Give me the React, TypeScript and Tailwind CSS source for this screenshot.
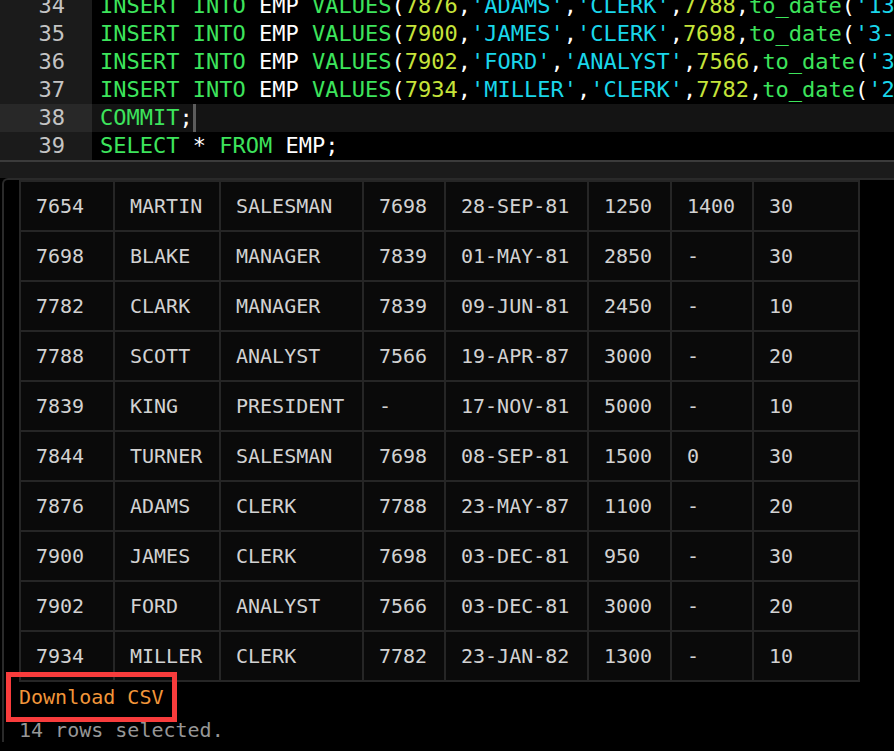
import React from "react";

const codeLines = [
  { no: 34, text: "INSERT INTO EMP VALUES(7876,'ADAMS','CLERK',7788,to_date('13-JUL-87','dd-mm-rr')-51,1100,NULL,20);" },
  { no: 35, text: "INSERT INTO EMP VALUES(7900,'JAMES','CLERK',7698,to_date('3-12-1981','dd-mm-yyyy'),950,NULL,30);" },
  { no: 36, text: "INSERT INTO EMP VALUES(7902,'FORD','ANALYST',7566,to_date('3-12-1981','dd-mm-yyyy'),3000,NULL,20);" },
  { no: 37, text: "INSERT INTO EMP VALUES(7934,'MILLER','CLERK',7782,to_date('23-1-1982','dd-mm-yyyy'),1300,NULL,10);" },
  { no: 38, text: "COMMIT;", active: true },
  { no: 39, text: "SELECT * FROM EMP;" },
];

const rows = [
  ["7654", "MARTIN", "SALESMAN", "7698", "28-SEP-81", "1250", "1400", "30"],
  ["7698", "BLAKE", "MANAGER", "7839", "01-MAY-81", "2850", "-", "30"],
  ["7782", "CLARK", "MANAGER", "7839", "09-JUN-81", "2450", "-", "10"],
  ["7788", "SCOTT", "ANALYST", "7566", "19-APR-87", "3000", "-", "20"],
  ["7839", "KING", "PRESIDENT", "-", "17-NOV-81", "5000", "-", "10"],
  ["7844", "TURNER", "SALESMAN", "7698", "08-SEP-81", "1500", "0", "30"],
  ["7876", "ADAMS", "CLERK", "7788", "23-MAY-87", "1100", "-", "20"],
  ["7900", "JAMES", "CLERK", "7698", "03-DEC-81", "950", "-", "30"],
  ["7902", "FORD", "ANALYST", "7566", "03-DEC-81", "3000", "-", "20"],
  ["7934", "MILLER", "CLERK", "7782", "23-JAN-82", "1300", "-", "10"],
];

const keywords = ["INSERT", "INTO", "VALUES", "COMMIT", "SELECT", "FROM", "to_date", "NULL"];

// split a line into coloured pieces
const tokenize = (line: string) => {
  const re = /('[^']*'|\d+|[A-Za-z_]+|[^A-Za-z_\d']+)/g;
  const out: { t: string; c: string }[] = [];
  let m: RegExpExecArray | null;
  while ((m = re.exec(line))) {
    const t = m[0];
    let c = "text-white";
    if (t.startsWith("'")) c = "text-[#1ad6ea]";
    else if (/^\d+$/.test(t)) c = "text-[#c6e43a]";
    else if (keywords.includes(t)) c = "text-[#3de45c]";
    out.push({ t, c });
  }
  return out;
};

const App: React.FC = () => {
  return (
    <div className="relative w-[894px] h-[751px] overflow-hidden bg-black font-['DejaVu_Sans_Mono',monospace]">
      {/* editor */}
      <div className="-mt-[8px] text-[22px] leading-[28px]">
        {codeLines.map((line) => (
          <div key={line.no} className="flex h-[28px]">
            <div
              className={`w-[92px] shrink-0 pr-[27px] text-right text-[#c4c4c4] ${line.active ? "bg-[#282828]" : "bg-[#1b1b1b]"}`}
            >
              {line.no}
            </div>
            <div className={`flex-1 overflow-hidden whitespace-pre pl-2 ${line.active ? "bg-[#141414]" : ""}`}>
              {tokenize(line.text).map((tok, i) => (
                <span key={i} className={tok.c}>
                  {tok.t}
                </span>
              ))}
              {line.active && <span className="inline-block w-[3px] h-[28px] align-top bg-[#5c5c5c]"></span>}
            </div>
          </div>
        ))}
      </div>
      <div className="h-[2px] bg-[#3b3b3b]"></div>
      <div className="h-[16px] bg-[#1b1b1b]"></div>

      {/* results */}
      <div className="ml-[2px] rounded-tl-[6px] border-l-2 border-t-2 border-[#2a2a2a] pl-[15px] text-[20px]">
        <div className="grid w-[841px] grid-cols-[92px_104px_141px_80px_141px_81px_80px_104px] gap-[2px] bg-[#262626] p-[2px]">
          {rows.map((row, r) =>
            row.map((cell, c) => (
              <div key={`${r}-${c}`} className="flex h-[48px] items-center bg-[#0a0a0a] pl-[15px] text-[#d2d2d2]">
                {cell}
              </div>
            ))
          )}
        </div>
        <div className="mt-[3px] h-[24px] leading-[24px] text-[#f2963a]">Download CSV</div>
        <div className="mt-[9px] h-[24px] leading-[24px] text-[#979797]">14 rows selected.</div>
      </div>

      {/* highlight annotation */}
      <div className="absolute left-[6px] top-[672px] h-[50px] w-[171px] border-[5px] border-[#f83c3c]"></div>
    </div>
  );
};

export default App;
